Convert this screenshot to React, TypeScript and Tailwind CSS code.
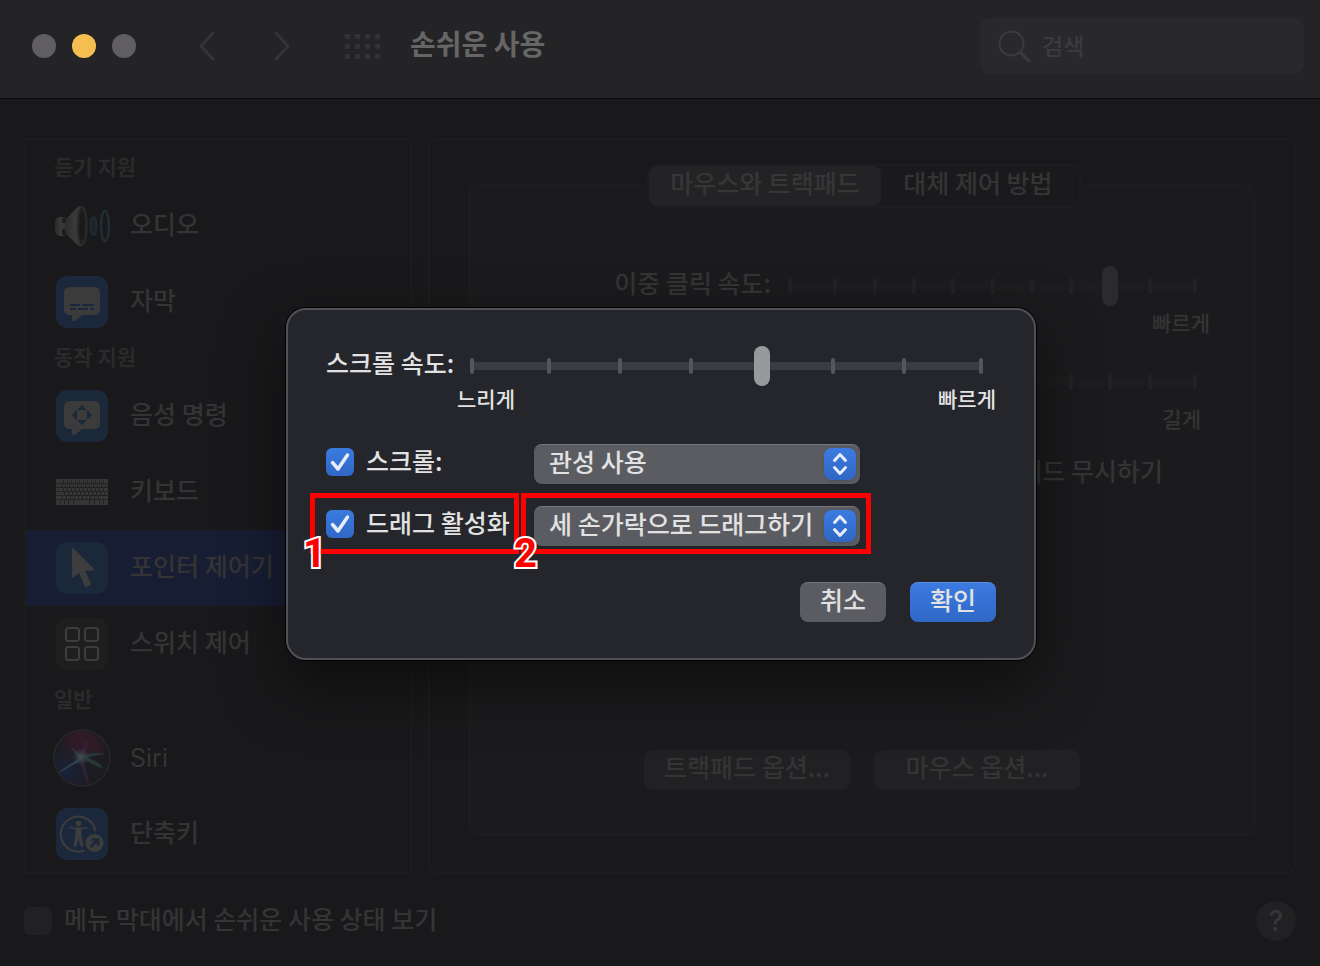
import { useState } from 'react';
import type { ReactNode } from 'react';

interface SidebarItem {
  name: string;
  icon: ReactNode;
}

interface SidebarGroup {
  title: string;
  items: SidebarItem[];
}

function Tile({ className, children }: { className: string; children?: ReactNode }) {
  return (
    <svg viewBox="0 0 52 52" className="h-[52px] w-[52px]" aria-hidden="true">
      <rect width="52" height="52" rx="11" className={className} />
      {children}
    </svg>
  );
}

function AudioIcon() {
  return (
    <svg viewBox="0 0 56 44" className="-mx-0.5 h-11 w-14 shrink-0" aria-hidden="true">
      <defs>
        <linearGradient id="horn" x1="0" x2="1">
          <stop offset="0" stopColor="#2b2b2b" />
          <stop offset="0.5" stopColor="#3a3a39" />
          <stop offset="1" stopColor="#2d2d2d" />
        </linearGradient>
      </defs>
      <rect x="1" y="13" width="13" height="19" rx="5" fill="url(#horn)" />
      <path d="M8 14h4v5H8zM8 25h4v6H8z" fill="#1d1d1e" />
      <path d="M12 15 24 2.500Q28 1 30 6v32q-2 6-6 3.500L12 30Q10 22 12 15Z" fill="url(#horn)" />
      <ellipse cx="28" cy="22" rx="5" ry="19.500" fill="#222223" stroke="#343434" />
      <ellipse cx="28" cy="22" rx="2.500" ry="14" fill="#19191a" />
      <ellipse cx="39.500" cy="22" rx="2.800" ry="9" fill="#1e2327" stroke="#1f2c33" strokeWidth="2" />
      <ellipse cx="51" cy="22" rx="4" ry="15" fill="none" stroke="#202d33" strokeWidth="2.500" />
    </svg>
  );
}

function SubtitleIcon() {
  return (
    <Tile className="fill-[#1b273b]">
      <path d="M14 11h24q6 0 6 6v16q0 6-6 6H26l-7 6q-3 1-3-2v-4h-2q-6 0-6-6V17q0-6 6-6Z" fill="#3b3b3b" />
      <path d="M14 29h10m2 0h12M14 33h6m2 0h10m2 0h4" stroke="#1b273b" strokeWidth="2" />
    </Tile>
  );
}

function VoiceIcon() {
  return (
    <Tile className="fill-[#1b2839]">
      <path d="M14 11h24q6 0 6 6v16q0 6-6 6H26l-7 6q-3 1-3-2v-4h-2q-6 0-6-6V17q0-6 6-6Z" fill="#3b3b3b" />
      <path d="m26 15 5 5H21Zm0 20 5-5H21ZM16 25l5-5v10Zm20 0-5-5v10Z" fill="#1b2839" />
    </Tile>
  );
}

function KeyboardIcon() {
  return (
    <svg viewBox="0 0 52 26" className="h-[26px] w-[52px]" aria-hidden="true">
      <rect width="52" height="26" rx="1" fill="#363636" />
      <path d="M0 4.500h52M0 8.500h52M0 12.500h52M0 16.500h52M0 20.500h52" stroke="#232324" />
      <path d="M7 2.500h44M5 6.500h46M7 10.500h43M8 14.500h42M6 18.500h40" stroke="#232324" strokeWidth="3" strokeDasharray="1 3" />
      <path d="M4.500 21v4M8.500 21v4M12.500 21v4M17.500 21v4M33.500 21v4M38.500 21v4M43.500 21v4M47.500 21v4" stroke="#232324" />
    </svg>
  );
}

function PointerIcon() {
  return (
    <Tile className="fill-[#1b2839]">
      <path d="M16 7.500v27q0 2 1.500 1L23 31l5.500 12.500q1 2 3 1l2-1q2-1 1-3L29 29l8-.5q2-.3.500-2L18 6.800q-2-1.500-2 .7Z" fill="#3d3d3d" />
    </Tile>
  );
}

function SwitchIcon() {
  return (
    <Tile className="fill-[#1e1e1f]">
      <g fill="none" stroke="#3d3d3d" strokeWidth="2">
        <rect x="10" y="10" width="13" height="13" rx="2.500" />
        <rect x="29" y="10" width="13" height="13" rx="2.500" />
        <rect x="10" y="29" width="13" height="13" rx="2.500" />
        <rect x="29" y="29" width="13" height="13" rx="2.500" />
      </g>
    </Tile>
  );
}

function SiriIcon() {
  return (
    <svg viewBox="0 0 58 58" className="-mx-[3px] h-[58px] w-[58px] shrink-0" aria-hidden="true">
      <defs>
        <radialGradient id="siriPink" cx="0.500" cy="0.150" r="0.500">
          <stop offset="0" stopColor="#351b28" />
          <stop offset="1" stopColor="#351b28" stopOpacity="0" />
        </radialGradient>
        <radialGradient id="siriBlue" cx="0.200" cy="0.750" r="0.500">
          <stop offset="0" stopColor="#1a2238" />
          <stop offset="1" stopColor="#1a2238" stopOpacity="0" />
        </radialGradient>
        <radialGradient id="siriCore">
          <stop offset="0" stopColor="#455254" />
          <stop offset="1" stopColor="#334144" stopOpacity="0" />
        </radialGradient>
      </defs>
      <circle cx="29" cy="29" r="28" fill="#1c1b20" />
      <circle cx="29" cy="29" r="27" fill="url(#siriPink)" />
      <circle cx="29" cy="29" r="27" fill="url(#siriBlue)" />
      <path d="M13 14Q29-4 47 16q6 8 5 11-12-1-22 0-10-9-17-13Z" fill="#311a27" opacity="0.600" />
      <path d="M28 28 7 42l-1 2 23-13Z" fill="#2c414a" />
      <path d="M27 28q12-6 25-3-12 2-22 4Z" fill="#26373a" />
      <path d="M29 27q17 4 21 12-4 1-21-10Z" fill="#243835" />
      <path d="M26 29q6-20 8-16 2 4-3 18l5 22q0 4-3-1Z" fill="#342337" opacity="0.800" />
      <path d="M17 18q8 4 13 11l-3 1Z" fill="#2b363c" />
      <circle cx="28" cy="28" r="9" fill="url(#siriCore)" />
      <circle cx="29" cy="29" r="28" fill="none" stroke="#27272c" strokeWidth="1.500" />
    </svg>
  );
}

function ShortcutIcon() {
  return (
    <Tile className="fill-[#1b283b]">
      <path d="M39.500 23a17.500 17.500 0 1 0-11 19.500" fill="none" stroke="#3d3d3d" strokeWidth="2" />
      <circle cx="22.500" cy="15.500" r="2.700" fill="#3d3d3d" />
      <path d="m13 19.500 7 1.500v7l-2 10h2l2.500-9 2.500 9h2l-2-10v-7l7-1.500" fill="#3d3d3d" stroke="#3d3d3d" strokeLinejoin="round" />
      <circle cx="38.500" cy="35" r="11" fill="#1b283b" />
      <circle cx="38.500" cy="35" r="9" fill="#3d3d3d" />
      <path d="m34.500 39 7.500-7.500m-6.500 0H42V38" fill="none" stroke="#1b283b" strokeWidth="2.500" />
    </Tile>
  );
}

const groups: SidebarGroup[] = [
  {
    title: '듣기 지원',
    items: [
      { name: '오디오', icon: <AudioIcon /> },
      { name: '자막', icon: <SubtitleIcon /> },
    ],
  },
  {
    title: '동작 지원',
    items: [
      { name: '음성 명령', icon: <VoiceIcon /> },
      { name: '키보드', icon: <KeyboardIcon /> },
      { name: '포인터 제어기', icon: <PointerIcon /> },
      { name: '스위치 제어', icon: <SwitchIcon /> },
    ],
  },
  {
    title: '일반',
    items: [
      { name: 'Siri', icon: <SiriIcon /> },
      { name: '단축키', icon: <ShortcutIcon /> },
    ],
  },
];

interface SliderProps {
  id: string;
  steps: number;
  initial: number;
  dim?: boolean;
  className: string;
  labelledBy?: string;
}

function Slider({ id, steps, initial, dim, className, labelledBy }: SliderProps) {
  const [value, setValue] = useState(initial);

  // the outer ticks sit on the ends of the track, the rest follow the thumb
  const tickLeft = (i: number) => {
    if (i === 0) return '0px';
    if (i === steps) return 'calc(100% - 4px)';
    return `calc(6px + (100% - 16px) * ${i / steps})`;
  };

  return (
    <div className={`relative h-10 ${className}`}>
      <div className={`absolute inset-x-0.5 top-4 h-2 ${dim ? 'bg-[#1d1d1f]' : 'bg-[#3b3c41]'}`} />
      {Array.from({ length: steps + 1 }, (_, i) => (
        <span
          key={i}
          className={`absolute top-3 h-4 w-1 rounded-sm ${dim ? 'bg-[#222224]' : 'bg-[#55565b]'}`}
          style={{ left: tickLeft(i) }}
        />
      ))}
      <input
        id={id}
        type="range"
        min={0}
        max={steps}
        value={value}
        aria-labelledby={labelledBy}
        onChange={(e) => setValue(Number(e.target.value))}
        className={`relative block h-10 w-full appearance-none bg-transparent outline-none [&::-webkit-slider-thumb]:h-10 [&::-webkit-slider-thumb]:w-4 [&::-webkit-slider-thumb]:appearance-none [&::-webkit-slider-thumb]:rounded-full ${
          dim ? '[&::-webkit-slider-thumb]:bg-[#2b2b2d]' : '[&::-webkit-slider-thumb]:bg-[#98999d]'
        }`}
      />
    </div>
  );
}

function CheckOption({ label }: { label: string }) {
  const [checked, setChecked] = useState(true);

  return (
    <label className="flex h-9 w-[208px] items-center gap-3">
      <span className="relative h-7 w-7">
        <input
          type="checkbox"
          checked={checked}
          onChange={(e) => setChecked(e.target.checked)}
          className="block h-7 w-7 appearance-none rounded-md bg-[#5b5c61] checked:bg-linear-to-b checked:from-[#3b7ae0] checked:to-[#3068c6]"
        />
        {checked && (
          <svg viewBox="0 0 28 28" className="pointer-events-none absolute inset-0" aria-hidden="true">
            <path d="m6.500 14.500 5.500 6.500 9.500-14" fill="none" stroke="#e6edf9" strokeWidth="3.500" strokeLinecap="round" strokeLinejoin="round" />
          </svg>
        )}
      </span>
      <span className="pb-1">{label}</span>
    </label>
  );
}

function PopupSelect({ label, option }: { label: string; option: string }) {
  return (
    <div className="relative w-[326px]">
      <select
        aria-label={label}
        className="block h-10 w-full appearance-none rounded-lg border-t border-[#77787c] bg-[#5b5c61] pb-2 pl-[15px] shadow-sm outline-none"
      >
        <option>{option}</option>
      </select>
      <span className="pointer-events-none absolute top-1 right-1 h-8 w-8 rounded-lg bg-linear-to-b from-[#3b7be2] to-[#2f66c2] shadow-sm">
        <svg viewBox="0 0 32 32" aria-hidden="true">
          <path d="m10.500 12.500 5.500-6 5.500 6M10.500 19.500l5.500 6 5.500-6" fill="none" stroke="#e6edf9" strokeWidth="3" strokeLinecap="round" strokeLinejoin="round" />
        </svg>
      </span>
    </div>
  );
}

function Marker({ number, className }: { number: string; className: string }) {
  return (
    <div className={`pointer-events-none absolute -top-[13px] h-[61px] border-5 border-[#ff0000] ${className}`}>
      <span className="absolute top-9 -left-3 font-['Roboto',sans-serif] text-[40px] leading-10 font-bold text-[#ff0000] [-webkit-text-stroke:4px_white] [paint-order:stroke_fill]">
        {number}
      </span>
    </div>
  );
}

function Header() {
  return (
    <header className="flex h-[99px] items-center border-b border-[#0c0c0d] bg-[#242426] pr-4 pb-1.5 pl-8">
      <div className="flex gap-4">
        <span className="h-6 w-6 rounded-full bg-[#605e63]" />
        <span className="h-6 w-6 rounded-full bg-[#f4be50]" />
        <span className="h-6 w-6 rounded-full bg-[#605e63]" />
      </div>
      <div className="ml-[62px] flex gap-[58px] text-[#343436]">
        <button type="button" aria-label="<">
          <svg viewBox="0 0 18 30" className="h-[30px] w-[18px]" fill="none" stroke="currentColor" strokeWidth="3" strokeLinecap="round" strokeLinejoin="round">
            <path d="M15 2 3 15l12 13" />
          </svg>
        </button>
        <button type="button" aria-label=">">
          <svg viewBox="0 0 18 30" className="h-[30px] w-[18px]" fill="none" stroke="currentColor" strokeWidth="3" strokeLinecap="round" strokeLinejoin="round">
            <path d="m2 2 12 13L2 28" />
          </svg>
        </button>
      </div>
      <div className="ml-[53px] grid grid-cols-4 gap-x-[5px] gap-y-[5px]">
        {Array.from({ length: 12 }, (_, i) => (
          <span key={i} className="h-[5px] w-[5px] rounded-[1px] bg-[#323234]" />
        ))}
      </div>
      <h1 className="ml-[30px] pb-1.5 text-[28px] leading-9 font-bold text-[#666667]">손쉬운 사용</h1>
      <label className="ml-auto flex h-14 w-[324px] items-center gap-3 rounded-[10px] bg-[#29292b] pl-[18px]">
        <svg viewBox="0 0 32 32" className="h-8 w-8 shrink-0" fill="none" stroke="#3b3b3d" strokeLinecap="round" aria-hidden="true">
          <circle cx="13.500" cy="13.500" r="12" strokeWidth="2" />
          <path d="m22.500 22.500 8 8" strokeWidth="3" />
        </svg>
        <input
          type="search"
          placeholder="검색"
          className="min-w-0 flex-1 bg-transparent pb-0.5 text-[23px] outline-none placeholder:text-[#3b3b3d]"
        />
      </label>
    </header>
  );
}

function Sidebar() {
  const [selected, setSelected] = useState('포인터 제어기');

  return (
    <nav className="w-[388px] shrink-0 border-2 border-[#1c1c1e] pt-2.5">
      {groups.map((group) => (
        <section key={group.title}>
          <h2 className="h-[38px] pl-7 text-[21px] leading-8 font-bold text-[#2a2a2b]">{group.title}</h2>
          {group.items.map((item) => (
            <button
              key={item.name}
              type="button"
              onClick={() => setSelected(item.name)}
              className={`flex h-[76px] w-full items-center gap-[22px] pl-[30px] text-left ${
                selected === item.name ? 'bg-[#171e33]' : ''
              }`}
            >
              <span className="flex w-[52px] shrink-0 justify-center">{item.icon}</span>
              <span className={item.name === 'Siri' ? "font-['Inter',sans-serif] font-normal" : 'pb-1.5'}>{item.name}</span>
            </button>
          ))}
        </section>
      ))}
    </nav>
  );
}

function PointerPanel() {
  return (
    <main className="flex flex-1 flex-col rounded-[10px] border-2 border-[#1d1d1f] px-[38px] pt-6 pb-9">
      <div className="z-10 ml-1 flex h-11 w-[434px] self-center rounded-[10px] border-2 border-[#1d1d1f] bg-[#1a1a1c]">
        <button type="button" className="w-[232px] rounded-lg bg-[#232325] pb-2 text-[#363637]">마우스와 트랙패드</button>
        <button type="button" className="flex-1 pr-1 pb-2">대체 제어 방법</button>
      </div>
      <div className="-mt-6 flex flex-1 flex-col items-end rounded-[10px] border-2 border-[#1d1d1f] bg-[#1b1b1d] pt-20 pb-11">
        <div className="mr-[57px] flex gap-[17px]">
          <label htmlFor="double-click" className="flex h-9 items-center pb-1">이중 클릭 속도:</label>
          <Slider id="double-click" steps={10} initial={8} dim className="w-[409px]" />
        </div>
        <p className="mt-1 mr-11 h-7 text-[21px] leading-6">빠르게</p>
        <div className="mt-6 mr-[57px]">
          <Slider id="delay" steps={10} initial={3} dim labelledBy="delay-long" className="w-[409px]" />
        </div>
        <p id="delay-long" className="mt-1 mr-[53px] h-7 text-[21px] leading-6">길게</p>
        <p className="mt-5 mr-[91px] leading-8">트랙패드 무시하기</p>
        <div className="mt-auto flex gap-6 self-center">
          <button type="button" className="h-10 w-[206px] rounded-lg bg-[#212123] pb-2">트랙패드 옵션...</button>
          <button type="button" className="h-10 w-[206px] rounded-lg bg-[#212123] pb-2">마우스 옵션...</button>
        </div>
      </div>
    </main>
  );
}

function ScrollDialog() {
  return (
    <div
      role="dialog"
      className="w-[750px] rounded-[20px] border-2 border-[#515257] bg-[#25262b] px-[38px] py-9 text-[#e2e2e3] shadow-[0_0_0_1px_#000,0_24px_60px_rgba(0,0,0,0.5)]"
    >
      <div className="flex items-start gap-4">
        <label htmlFor="scroll-speed" className="flex h-9 items-center pb-1">스크롤 속도:</label>
        <Slider id="scroll-speed" steps={7} initial={4} className="mr-[13px] flex-1" />
      </div>
      <div className="ml-[131px] flex justify-between text-[21px] leading-6">
        <span>느리게</span>
        <span>빠르게</span>
      </div>
      <div className="mt-[34px] flex items-start">
        <CheckOption label="스크롤:" />
        <PopupSelect label="스크롤:" option="관성 사용" />
      </div>
      <div className="relative mt-[22px] flex items-start">
        <CheckOption label="드래그 활성화" />
        <PopupSelect label="드래그 활성화" option="세 손가락으로 드래그하기" />
        <Marker number="1" className="-left-4 w-[209px]" />
        <Marker number="2" className="left-[195px] w-[350px]" />
      </div>
      <div className="mt-9 flex justify-end gap-6">
        <button type="button" className="h-10 w-[86px] rounded-lg border-t border-[#737478] bg-[#5b5c61] pb-2">취소</button>
        <button type="button" className="h-10 w-[86px] rounded-lg border-t border-[#5c90e4] bg-linear-to-b from-[#3b7ae0] to-[#3068c6] pb-2">확인</button>
      </div>
    </div>
  );
}

export default function App() {
  return (
    <div className="relative flex min-h-screen flex-col overflow-hidden bg-[#19191b] font-['Noto_Sans_CJK_KR',sans-serif] text-[25px] leading-8 font-medium text-[#343435]">
      <Header />
      <div className="flex flex-1 gap-4 px-6 pt-[39px]">
        <Sidebar />
        <PointerPanel />
      </div>
      <footer className="flex items-center justify-between px-6 pt-[27px] pb-[25px]">
        <label className="flex items-center gap-3">
          <input type="checkbox" className="h-7 w-7 appearance-none rounded-md bg-[#212123]" />
          <span className="pb-1.5">메뉴 막대에서 손쉬운 사용 상태 보기</span>
        </label>
        <button type="button" className="h-10 w-10 rounded-full bg-[#212123] font-['Inter',sans-serif] text-[28px] text-[#363638]">?</button>
      </footer>
      <div className="absolute inset-x-0 top-[308px] z-20 flex justify-center pl-0.5">
        <ScrollDialog />
      </div>
    </div>
  );
}
